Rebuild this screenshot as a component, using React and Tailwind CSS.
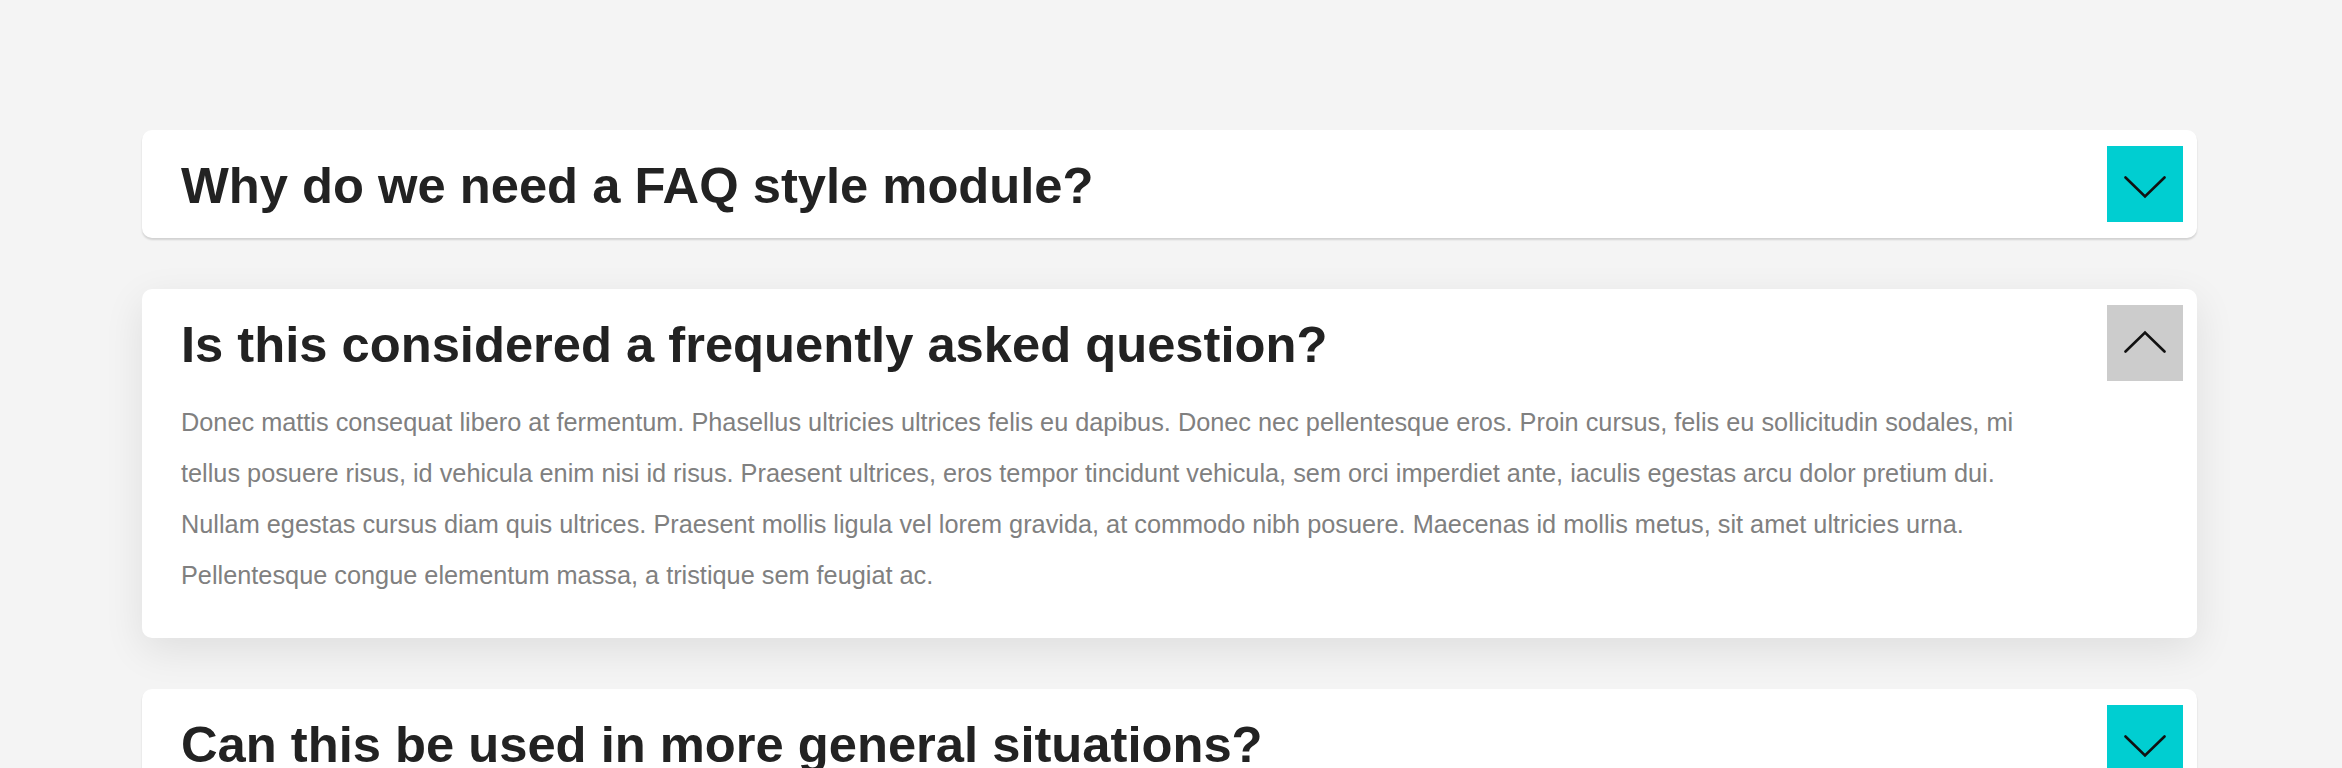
import { useState } from "react";

const faqs = [
  {
    q: "Why do we need a FAQ style module?",
    a: "Donec mattis consequat libero at fermentum. Phasellus ultricies ultrices felis eu dapibus. Donec nec pellentesque eros. Proin cursus, felis eu sollicitudin sodales, mi tellus posuere risus, id vehicula enim nisi id risus. Praesent ultrices, eros tempor tincidunt vehicula, sem orci imperdiet ante, iaculis egestas arcu dolor pretium dui. Nullam egestas cursus diam quis ultrices. Praesent mollis ligula vel lorem gravida, at commodo nibh posuere. Maecenas id mollis metus, sit amet ultricies urna. Pellentesque congue elementum massa, a tristique sem feugiat ac.",
  },
  {
    q: "Is this considered a frequently asked question?",
    a: "Donec mattis consequat libero at fermentum. Phasellus ultricies ultrices felis eu dapibus. Donec nec pellentesque eros. Proin cursus, felis eu sollicitudin sodales, mi tellus posuere risus, id vehicula enim nisi id risus. Praesent ultrices, eros tempor tincidunt vehicula, sem orci imperdiet ante, iaculis egestas arcu dolor pretium dui. Nullam egestas cursus diam quis ultrices. Praesent mollis ligula vel lorem gravida, at commodo nibh posuere. Maecenas id mollis metus, sit amet ultricies urna. Pellentesque congue elementum massa, a tristique sem feugiat ac.",
  },
  {
    q: "Can this be used in more general situations?",
    a: "Donec mattis consequat libero at fermentum. Phasellus ultricies ultrices felis eu dapibus.",
  },
];

function Chevron({ open }) {
  return (
    <svg width="42" height="24" viewBox="0 0 42 24" fill="none" stroke="#111" strokeWidth="2.6" strokeLinecap="round" strokeLinejoin="miter">
      {open ? <path d="M1.5 21.5 L21 2.5 L40.5 21.5" /> : <path d="M1.5 2.5 L21 21.5 L40.5 2.5" />}
    </svg>
  );
}

export default function App() {
  const [open, setOpen] = useState(1);

  return (
    <div className="min-h-screen bg-[#f4f4f4] pt-[130px] font-['Liberation_Sans',Arial,sans-serif]">
      <div className="ml-[142px] flex w-[2055px] flex-col gap-[51px]">
        {faqs.map((item, i) => {
          const isOpen = open === i;
          return (
            <div
              key={item.q}
              className={
                isOpen
                  ? "rounded-[10px] bg-white shadow-[0_12px_40px_rgba(0,0,0,0.09)]"
                  : "rounded-[10px] bg-white shadow-[0_2px_2px_rgba(0,0,0,0.14)]"
              }
            >
              <div className="flex items-center justify-between pl-[39px] pr-[14px] pt-4 pb-4">
                <h2 className="pt-[4px] text-[50.7px] font-bold leading-none text-[#222]">{item.q}</h2>
                <button
                  onClick={() => setOpen(isOpen ? -1 : i)}
                  className={
                    isOpen
                      ? "flex h-[76px] w-[76px] items-center justify-center bg-[#cccccc] pb-[2px]"
                      : "flex h-[76px] w-[76px] items-center justify-center bg-[#00ced1] pt-[6px]"
                  }
                >
                  <Chevron open={isOpen} />
                </button>
              </div>
              {isOpen && (
                <p className="w-[1905px] pl-[39px] pb-[37px] text-[25.3px] leading-[51px] text-[#808080]">{item.a}</p>
              )}
            </div>
          );
        })}
      </div>
    </div>
  );
}
